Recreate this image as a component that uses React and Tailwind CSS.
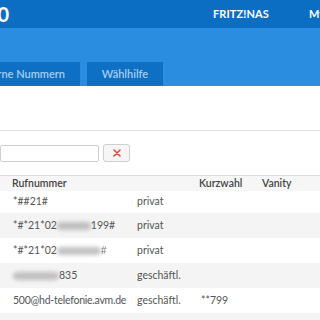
import React from "react";

const Blur = ({ w }) => (
  <span
    className="inline-block h-[8px] bg-[#a8a8a8] blur-[2px] rounded-full align-middle opacity-70"
    style={{ width: w }}
  />
);

const rows = [
  { num: <>*##21#</>, type: "privat", kw: "", gray: false },
  { num: <>*#*21*02<Blur w={34} /><span>199#</span></>, type: "privat", kw: "", gray: true },
  { num: <>*#*21*02<Blur w={44} /><span className="opacity-60">#</span></>, type: "privat", kw: "", gray: false },
  { num: <><Blur w={46} /><span>835</span></>, type: "geschäftl.", kw: "", gray: true },
  { num: <span className="tracking-[-0.25px]">500@hd-telefonie.avm.de</span>, type: "geschäftl.", kw: "**799", gray: false },
  { num: <>&nbsp;</>, type: "", kw: "", gray: true },
];

export default function App() {
  return (
    <div className="w-[320px] h-[320px] overflow-hidden bg-white font-['Lato','Liberation_Sans',sans-serif]">
      {/* top bar */}
      <div className="h-[28px] bg-[#0b6ec3] flex items-center text-white font-bold whitespace-nowrap">
        <div className="w-[9px] flex justify-end overflow-visible">
          <span className="text-[20px] leading-none">7490</span>
        </div>
        <span className="ml-[204px] text-[11px] tracking-[0.1px]">FRITZ!NAS</span>
        <span className="ml-[40px] text-[11px]">MyFRITZ!</span>
      </div>
      {/* blue band with tabs */}
      <div className="h-[58px] bg-[#2b8de0] flex items-end">
        <div className="flex gap-[7px] text-[11px] text-[#a9cdf0] font-semibold">
          <div className="w-[80px] h-[24px] bg-[#0d70c5] flex items-center justify-end pr-[15px] overflow-hidden whitespace-nowrap">
            Interne Nummern
          </div>
          <div className="w-[76px] h-[24px] bg-[#0d70c5] flex items-center justify-center">
            Wählhilfe
          </div>
        </div>
      </div>
      {/* content */}
      <div className="h-[44px]" />
      <div className="h-px bg-[#e2e2e2]" />
      <div className="h-[13px]" />
      <div className="flex items-center gap-[4px] h-[18px]">
        <div className="w-[99px] h-[17px] border border-[#cfcfcf] rounded-[2px] bg-white" />
        <div className="w-[27px] h-[18px] border border-[#cfcfcf] rounded-[3px] bg-[#f6f6f6] flex items-center justify-center">
          <svg width="8" height="8" viewBox="0 0 8 8">
            <path d="M1 1L7 7M7 1L1 7" stroke="#e8473f" strokeWidth="1.6" strokeLinecap="round" />
          </svg>
        </div>
      </div>
      <div className="h-[13px]" />
      <div className="h-px bg-[#dcdcdc]" />
      <div className="h-[15px] bg-[#f6f6f6] grid grid-cols-[124px_63px_63px_1fr] pl-[12px] items-center text-[10.5px] font-semibold text-[#444]">
        <span>Rufnummer</span>
        <span />
        <span>Kurzwahl</span>
        <span>Vanity</span>
      </div>
      {rows.map((r, i) => (
        <div
          key={i}
          className={`${i === 0 ? "h-[22px]" : "h-[25px]"} ${r.gray ? "bg-[#f4f4f4]" : "bg-white"} grid grid-cols-[124px_64px_63px_1fr] pl-[13px] items-center text-[10.5px] text-[#555] whitespace-nowrap`}
        >
          <span className="flex items-center">{r.num}</span>
          <span>{r.type}</span>
          <span>{r.kw}</span>
          <span />
        </div>
      ))}
    </div>
  );
}
